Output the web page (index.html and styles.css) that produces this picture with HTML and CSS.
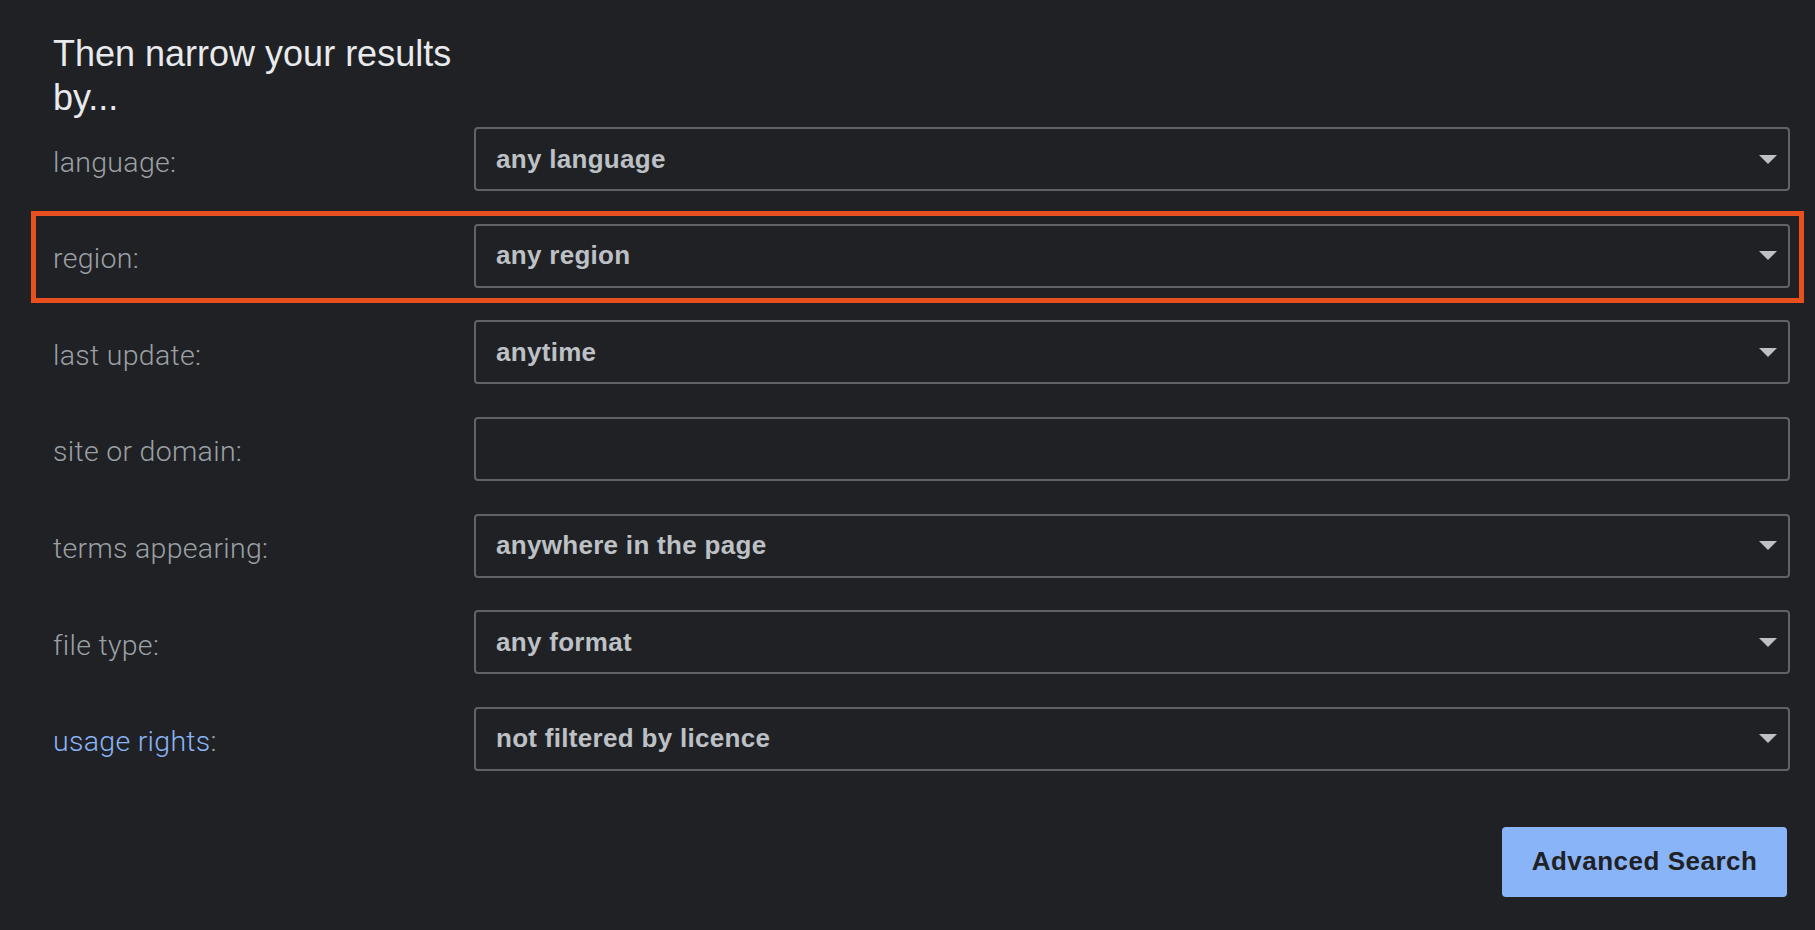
FILE: index.html
```html
<!DOCTYPE html>
<html lang="en">
<head>
<meta charset="utf-8">
<title>Advanced Search</title>
<link rel="stylesheet" href="styles.css">
</head>
<body>
<div class="page">
  <h1 class="heading">Then narrow your results by...</h1>
  <div class="rows">
    <div class="row">
      <div class="label">language:</div>
      <div class="select"><span>any language</span><svg class="arrow" width="18" height="9" viewBox="0 0 18 9"><path d="M0 0H18L9 9Z"/></svg></div>
    </div>
    <div class="row highlight">
      <div class="label">region:</div>
      <div class="select"><span>any region</span><svg class="arrow" width="18" height="9" viewBox="0 0 18 9"><path d="M0 0H18L9 9Z"/></svg></div>
    </div>
    <div class="row">
      <div class="label">last update:</div>
      <div class="select"><span>anytime</span><svg class="arrow" width="18" height="9" viewBox="0 0 18 9"><path d="M0 0H18L9 9Z"/></svg></div>
    </div>
    <div class="row">
      <div class="label">site or domain:</div>
      <div class="select input"></div>
    </div>
    <div class="row">
      <div class="label">terms appearing:</div>
      <div class="select"><span>anywhere in the page</span><svg class="arrow" width="18" height="9" viewBox="0 0 18 9"><path d="M0 0H18L9 9Z"/></svg></div>
    </div>
    <div class="row">
      <div class="label">file type:</div>
      <div class="select"><span>any format</span><svg class="arrow" width="18" height="9" viewBox="0 0 18 9"><path d="M0 0H18L9 9Z"/></svg></div>
    </div>
    <div class="row">
      <div class="label"><span class="link">usage rights</span>:</div>
      <div class="select"><span>not filtered by licence</span><svg class="arrow" width="18" height="9" viewBox="0 0 18 9"><path d="M0 0H18L9 9Z"/></svg></div>
    </div>
  </div>
  <div class="actions">
    <button class="btn">Advanced Search</button>
  </div>
</div>
</body>
</html>
```

FILE: styles.css
```css
html, body {
  margin: 0;
  padding: 0;
  background: #202124;
}

body {
  font-family: "Liberation Sans", Arial, sans-serif;
  width: 1815px;
  height: 930px;
  overflow: hidden;
}

.page {
  padding: 31.5px 25px 0 53px;
}

.heading {
  margin: 0 0 7.5px 0;
  width: 410px;
  font-size: 36px;
  line-height: 44px;
  font-weight: 400;
  color: #e8eaed;
}

.rows {
  display: flex;
  flex-direction: column;
  gap: 32.67px;
}

.row {
  display: flex;
  align-items: center;
  height: 64px;
}

.row.highlight {
  position: relative;
}

.row.highlight::after {
  content: "";
  position: absolute;
  top: -13px;
  bottom: -15px;
  left: -22px;
  right: -14px;
  border: 5px solid #e8511f;
  pointer-events: none;
}

.label {
  width: 421px;
  flex: none;
  font-family: Roboto, "Liberation Sans", sans-serif;
  font-weight: 300;
  font-size: 28.5px;
  letter-spacing: 0.3px;
  color: #9aa0a6;
  padding-top: 6px;
  white-space: nowrap;
}

.link {
  color: #8ab4f8;
}

.select {
  flex: 1;
  height: 64px;
  box-sizing: border-box;
  border: 2px solid #5f6368;
  border-radius: 4px;
  display: flex;
  align-items: center;
  justify-content: space-between;
  padding: 0 11px 0 20px;
  font-size: 26px;
  font-weight: 700;
  letter-spacing: 0.3px;
  color: #bdc1c6;
}

.arrow {
  fill: #bdc1c6;
  flex: none;
}

.actions {
  display: flex;
  justify-content: flex-end;
  margin-top: 56px;
  padding-right: 3px;
}

.btn {
  width: 285px;
  height: 70px;
  background: #8ab4f8;
  border: none;
  border-radius: 4px;
  font-family: "Liberation Sans", Arial, sans-serif;
  font-size: 26px;
  font-weight: 700;
  letter-spacing: 0.5px;
  color: #202124;
  padding: 0;
}
```
